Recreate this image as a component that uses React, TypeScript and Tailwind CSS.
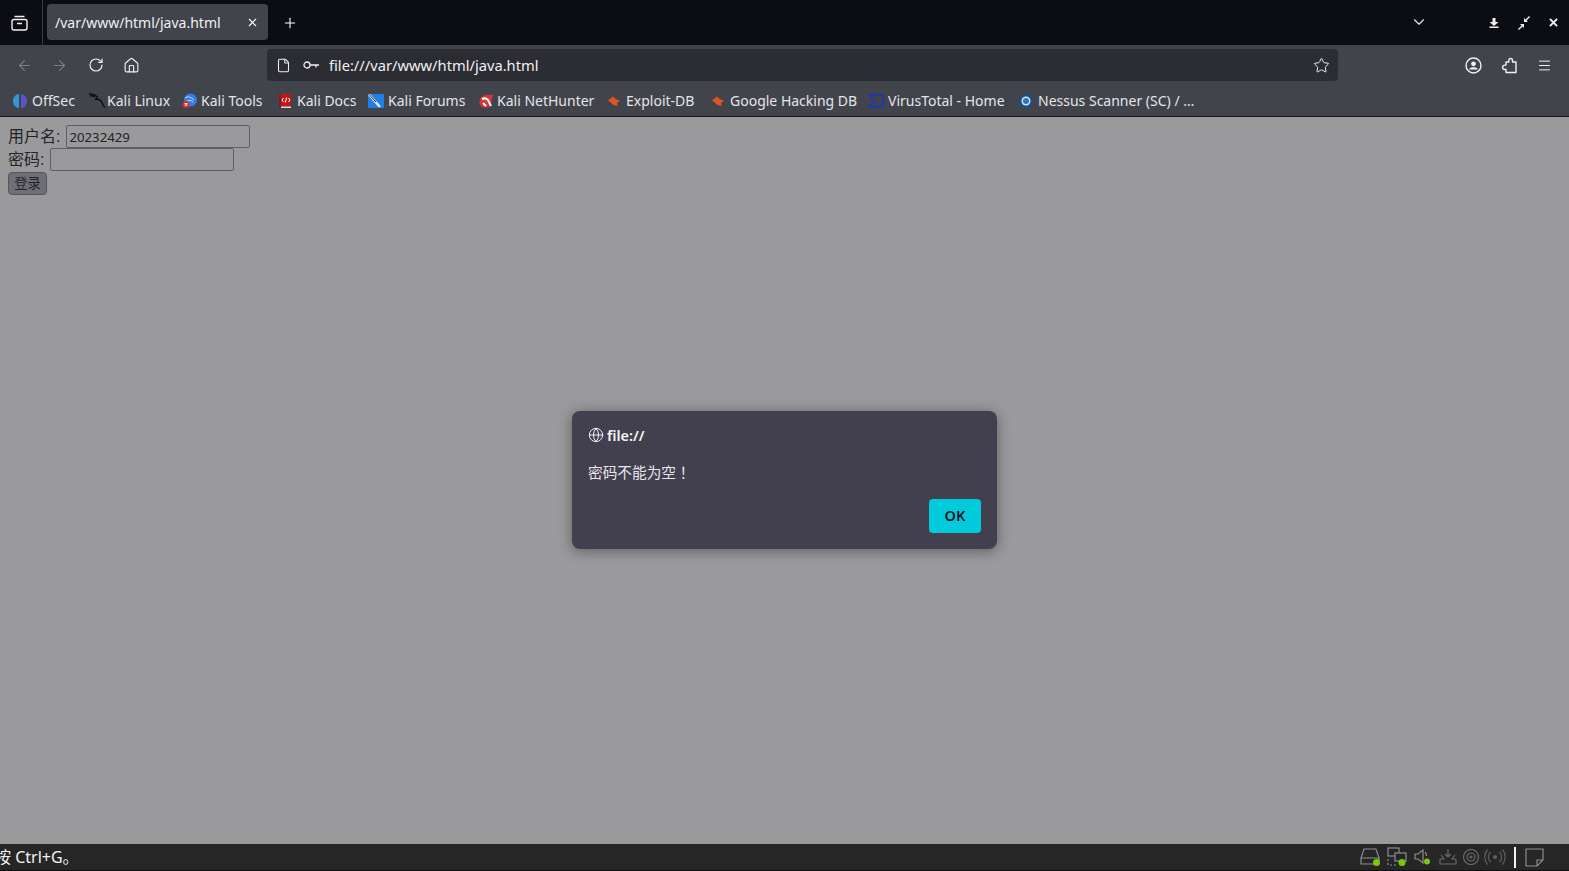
import { ArrowLeft, ArrowRight, RotateCw, House, File, Star, Menu, ChevronDown, X, Plus, Globe } from 'lucide-react';
import type { ReactNode } from 'react';

const uiFont = "font-['Noto_Sans','Noto_Sans_CJK_JP',sans-serif]";

function OffSecIcon() {
  return (
    <svg width="16" height="16" viewBox="0 0 16 16">
      <path d="M7 1C3 1.500 1 4.500 1 8s2 6.500 6 7z" fill="#2f9bd0" />
      <path d="M9 1c4 .5 6 3.500 6 7s-2 6.500-6 7z" fill="#5b54c8" />
    </svg>
  );
}

function KaliIcon() {
  return (
    <svg width="18" height="16" viewBox="0 0 18 16" fill="none" stroke="#0b0b0b" strokeWidth="1.300">
      <path d="M1 1c3-.5 6 .5 8 2.500 1 1.200 0 2.500-2 2.500 2 0 5 .5 6.500 2.500 1 1.500 1.500 4 3.500 6" />
      <path d="M2 3c2-.5 4 0 5 1" />
    </svg>
  );
}

function KaliToolsIcon() {
  return (
    <svg width="16" height="16" viewBox="0 0 16 16">
      <circle cx="8.500" cy="7" r="6.500" fill="#2f7fe0" />
      <path d="M3 5c3-2 6-1 9 2M5 8c2-1 4-1 6 1" stroke="#cfe4ff" strokeWidth="1" fill="none" />
      <circle cx="4" cy="11.500" r="3.500" fill="#d92c2c" />
      <path d="M2.500 10.500h3M3.300 10.500v2.500M4.800 10.500v2.500" stroke="#fff" strokeWidth=".8" />
    </svg>
  );
}

function KaliDocsIcon() {
  return (
    <svg width="14" height="16" viewBox="0 0 14 16">
      <rect x="1" y="1" width="12" height="14" fill="#c31416" />
      <rect x="1" y="1" width="2" height="14" fill="#7a1f24" />
      <rect x="3" y="13.500" width="10" height="1.500" fill="#d9d9d9" />
      <path d="M5.500 5 4 7l1.500 2M10.500 5 12 7l-1.500 2M8.700 4.500 7.300 9.500" stroke="#fff" strokeWidth="1" fill="none" />
    </svg>
  );
}

function KaliForumsIcon() {
  return (
    <svg width="16" height="16" viewBox="0 0 16 16">
      <rect x="0" y="1" width="16" height="14" rx="1" fill="#1e7fe8" />
      <path d="M1 1.500 12 14" stroke="#e8e8e8" strokeWidth="2.500" />
      <path d="M1 1.500 8 9" stroke="#222" strokeWidth="1" />
    </svg>
  );
}

function NetHunterIcon() {
  return (
    <svg width="16" height="16" viewBox="0 0 16 16">
      <path d="M2 6c2-4 8-5 13-4-1 4-2 9-4 12-3 1-7 1-8-1C1 11 1 8 2 6z" fill="#d8343a" />
      <path d="M4 6c2-1 4-1 6 1l3 6M5 10l3 3" stroke="#fff" strokeWidth="2" fill="none" />
    </svg>
  );
}

function ExploitIcon() {
  return (
    <svg width="16" height="16" viewBox="0 0 16 16">
      <path d="M2 7c3-1 4-3 5-4 0 1.500 2 2.500 3 3l4 2-3 1.500 .5 3.500c-3-.5-5-1.500-6-3-1-1-3-1.500-3.500-3z" fill="#e0561c" />
    </svg>
  );
}

function VirusTotalIcon() {
  return (
    <svg width="16" height="16" viewBox="0 0 16 16" fill="none" stroke="#1336c9" strokeWidth="1.300">
      <path d="M1 2h14v12H1l6-6z" />
    </svg>
  );
}

function NessusIcon() {
  return (
    <svg width="16" height="16" viewBox="0 0 16 16">
      <circle cx="8" cy="8" r="7" fill="#1a4f8c" />
      <circle cx="8" cy="8" r="4.500" fill="#d4e6f5" />
      <circle cx="8" cy="8" r="3" fill="#2d74b8" />
    </svg>
  );
}

function Bookmark({ icon, label, width, gap = 'gap-[4px]' }: { icon: ReactNode; label: string; width: string; gap?: string }) {
  return (
    <div className={`flex items-center ${gap} ${width} shrink-0`}>
      <span className="shrink-0 flex">{icon}</span>
      <span className="text-[14px] leading-none text-[#e4e5e8] whitespace-nowrap">{label}</span>
    </div>
  );
}

function TrayIcons() {
  return (
    <div className="flex items-center h-full ml-auto pr-[24px] gap-[5px]">
      <svg width="22" height="20" viewBox="0 0 22 20" fill="none" stroke="#8d8d8d" strokeWidth="1.200">
        <path d="M4 2h12l3 9v6H1v-6zM1 11h18" />
        <circle cx="16.500" cy="15.500" r="3.500" fill="#7ac70c" stroke="none" />
      </svg>
      <svg width="21" height="20" viewBox="0 0 21 20" fill="none" stroke="#8d8d8d" strokeWidth="1.200">
        <rect x="1" y="1" width="11" height="8" />
        <rect x="8" y="6" width="11" height="8" fill="#262626" />
        <path d="M1 12v6h10" strokeDasharray="2 2" />
        <circle cx="15" cy="15.500" r="3.500" fill="#7ac70c" stroke="none" />
      </svg>
      <svg width="20" height="20" viewBox="0 0 20 20" fill="none" stroke="#8d8d8d" strokeWidth="1.200">
        <path d="M2 7h3l5-4v13l-5-4H2zM12 5c1 1 1.500 2.500 1.500 4" />
        <circle cx="14" cy="14.500" r="3" fill="#7ac70c" stroke="none" />
      </svg>
      <svg width="20" height="20" viewBox="0 0 20 20" fill="none" stroke="#6a6a6a" strokeWidth="1.200">
        <path d="M10 2v8M7 7l3 3 3-3M3 8l3 4H2M17 8l-3 4h4M2 12v5h16v-5" />
      </svg>
      <svg width="16" height="16" viewBox="2 2 16 16" fill="none" stroke="#6a6a6a" strokeWidth="1.200">
        <circle cx="10" cy="10" r="7.500" />
        <circle cx="10" cy="10" r="4" />
        <circle cx="10" cy="10" r="1" />
      </svg>
      <svg width="22" height="20" viewBox="0 0 22 20" fill="none" stroke="#5f5f5f" strokeWidth="1.200">
        <circle cx="11" cy="10" r="1.500" fill="#5f5f5f" />
        <path d="M6.500 5c-2.500 3-2.500 7 0 10M15.500 5c2.500 3 2.500 7 0 10M3.500 2.500c-3.500 4-3.500 11 0 15M18.500 2.500c3.500 4 3.500 11 0 15" />
      </svg>
      <div className="w-[2px] h-[21px] bg-[#f2f2f2] ml-[3px] mr-[4px]" />
      <svg width="20" height="20" viewBox="0 0 20 20" fill="none" stroke="#8d8d8d" strokeWidth="1.200">
        <path d="M1 2h17v11l-6 6H1zM18 13h-6v6" />
      </svg>
    </div>
  );
}

export default function App() {
  return (
    <div className={`w-screen h-screen overflow-hidden flex flex-col bg-[#9a9a9c] ${uiFont}`}>
      {/* tab strip */}
      <div className="h-[45px] flex-none flex items-center bg-[#0c0d12] text-white">
        <div className="w-[43px] h-full flex items-center justify-center pr-[3px] border-r border-[#3a3b40]">
          <svg width="17" height="16" viewBox="0 0 17 16" fill="none" stroke="#f2f2f4" strokeWidth="1.400">
            <rect x="1" y="4.500" width="15" height="10.500" rx="2" />
            <path d="M3.500 1.500h10M6 8.500h5" />
          </svg>
        </div>
        <div className="ml-[4px] w-[221px] h-[36px] rounded-[4px] bg-[#42444c] flex items-center pl-[8px] pr-[9px] mt-[-1px]">
          <span className="text-[14px] pt-[1px] text-[#f0f0f2] flex-1 whitespace-nowrap">/var/www/html/java.html</span>
          <X size={13} strokeWidth={2} />
        </div>
        <Plus size={16} strokeWidth={1.600} className="ml-[14px]" />
        <div className="ml-auto flex items-center h-full">
          <ChevronDown size={18} strokeWidth={1.500} className="mr-[60px] mt-[-2px] text-[#e8e8ea]" />
          <svg width="12" height="12" viewBox="0 0 12 12" fill="#eee" className="mr-[17px]">
            <path d="M4.500 1h3v4h3L6 9 1.500 5h3zM1.500 9.500h9V11h-9z" />
          </svg>
          <svg width="14" height="14" viewBox="0 0 14 14" fill="#eee" className="mr-[18px]">
            <path d="M13 1 9.500 4.500 11 6H7V2l1.500 1.500L12 0zM1 13l3.500-3.500L3 8h4v4l-1.500-1.500L2 14z" />
          </svg>
          <svg width="9" height="9" viewBox="0 0 10 10" stroke="#eee" strokeWidth="2.200" className="mr-[11px]">
            <path d="M1 1l8 8M9 1l-8 8" />
          </svg>
        </div>
      </div>

      {/* nav bar */}
      <div className="h-[40px] flex-none flex items-center bg-[#42444c] text-[#f0f0f2]">
        <ArrowLeft size={17} strokeWidth={1.500} className="ml-[16px] text-[#7d7f85]" />
        <ArrowRight size={17} strokeWidth={1.500} className="ml-[18px] text-[#7d7f85]" />
        <RotateCw size={16} strokeWidth={1.700} className="ml-[20px]" />
        <House size={17} strokeWidth={1.600} className="ml-[19px]" />
        <div className="ml-[127px] w-[1071px] h-[32px] rounded-[4px] bg-[#2c2d33] flex items-center pl-[9px] pr-[8px]">
          <File size={15} strokeWidth={1.700} />
          <svg width="17" height="10" viewBox="0 0 17 10" fill="none" stroke="#f0f0f2" strokeWidth="1.300" className="ml-[12px]">
            <circle cx="4" cy="5" r="3" />
            <path d="M7 5h9M13 5v2.500" />
          </svg>
          <span className="ml-[9px] text-[14.700px] text-[#f0f0f2] flex-1">file:///var/www/html/java.html</span>
          <Star size={17} strokeWidth={1.400} />
        </div>
        <div className="ml-auto flex items-center pr-[17px] gap-[19px]">
          <svg width="17" height="17" viewBox="0 0 17 17" fill="none" stroke="#f0f0f2" strokeWidth="1.400">
            <circle cx="8.500" cy="8.500" r="7.500" />
            <circle cx="8.500" cy="6.800" r="2.400" fill="#f0f0f2" stroke="none" />
            <path d="M4 12.500c1-1.800 2.500-2.200 4.500-2.200s3.500.4 4.500 2.200z" fill="#f0f0f2" stroke="none" />
          </svg>
          <svg width="17" height="17" viewBox="0 0 17 17" fill="none" stroke="#f0f0f2" strokeWidth="1.400" strokeLinejoin="round">
            <path d="M9.500 1.500c1.300 0 2 1 2 2V5h3.500v10.500H5V12.500H3.800a2.200 2.200 0 0 1 0-4.400H5V5h2.800V3.500c0-1 .5-2 1.700-2z" />
          </svg>
          <Menu size={15} strokeWidth={1.600} />
        </div>
      </div>

      {/* bookmarks */}
      <div className="h-[31px] flex-none flex items-center pl-[12px] bg-[#42444c] border-b border-[#15161a] box-content overflow-hidden">
        <Bookmark icon={<OffSecIcon />} label="OffSec" width="w-[76px]" />
        <Bookmark icon={<KaliIcon />} label="Kali Linux" width="w-[94px]" gap="gap-[1px]" />
        <Bookmark icon={<KaliToolsIcon />} label="Kali Tools" width="w-[96px]" gap="gap-[3px]" />
        <Bookmark icon={<KaliDocsIcon />} label="Kali Docs" width="w-[90px]" gap="gap-[5px]" />
        <Bookmark icon={<KaliForumsIcon />} label="Kali Forums" width="w-[110px]" />
        <Bookmark icon={<NetHunterIcon />} label="Kali NetHunter" width="w-[128px]" gap="gap-[3px]" />
        <Bookmark icon={<ExploitIcon />} label="Exploit-DB" width="w-[104px]" />
        <Bookmark icon={<ExploitIcon />} label="Google Hacking DB" width="w-[158px]" />
        <Bookmark icon={<VirusTotalIcon />} label="VirusTotal - Home" width="w-[150px]" />
        <Bookmark icon={<NessusIcon />} label="Nessus Scanner (SC) / …" width="w-[190px]" />
      </div>

      {/* page */}
      <main className="flex-1 relative bg-[#9a9a9c] p-[8px] font-['Liberation_Sans','Noto_Sans_CJK_SC',sans-serif] text-[16px] leading-[23px] text-[#232326]">
        <div className="flex items-center h-[23px]">
          <span>用户名:</span>
          <div className="ml-[6px] w-[184px] h-[23px] rounded-[2px] border border-[#5f5f68] pl-[2px] pt-[1px] flex items-center font-['Noto_Sans',sans-serif] text-[13.200px]">20232429</div>
        </div>
        <div className="flex items-center h-[23px]">
          <span>密码:</span>
          <div className="ml-[6px] w-[184px] h-[23px] rounded-[2px] border border-[#5f5f68]" />
        </div>
        <div className="mt-[1px] w-[39px] h-[23px] rounded-[4px] border border-[#55555e] bg-[#6f6f78] flex items-center justify-center text-[13.300px] leading-none">登录</div>

        {/* alert */}
        <div className={`absolute left-[572px] top-[294px] w-[425px] h-[138px] rounded-[8px] bg-[#42404e] shadow-[0_2px_14px_rgba(0,0,0,0.4)] p-[16px] text-[#f4f4f6] ${uiFont}`}>
          <div className="flex items-center gap-[3px] h-[16px]">
            <Globe size={16} strokeWidth={1.500} />
            <span className="text-[14.500px] font-semibold leading-none">file://</span>
          </div>
          <div className="mt-[19px] text-[14.670px] leading-[20px] text-[#e6e6ea]">密码不能为空！</div>
          <div className="flex justify-end mt-[17px]">
            <div className="w-[52px] h-[34px] rounded-[4px] bg-[#00cadb] text-[#15141a] text-[14.500px] font-semibold pb-[1px] flex items-center justify-center">OK</div>
          </div>
        </div>
      </main>

      {/* vm status bar */}
      <footer className="h-[27px] flex-none flex items-center bg-[#262626] border-b border-[#101010] text-[#f2f2f2] overflow-hidden">
        <span className="text-[16px] ml-[-5px] whitespace-nowrap font-['Noto_Sans','Noto_Sans_CJK_SC',sans-serif]">按 Ctrl+G。</span>
        <TrayIcons />
      </footer>
    </div>
  );
}
